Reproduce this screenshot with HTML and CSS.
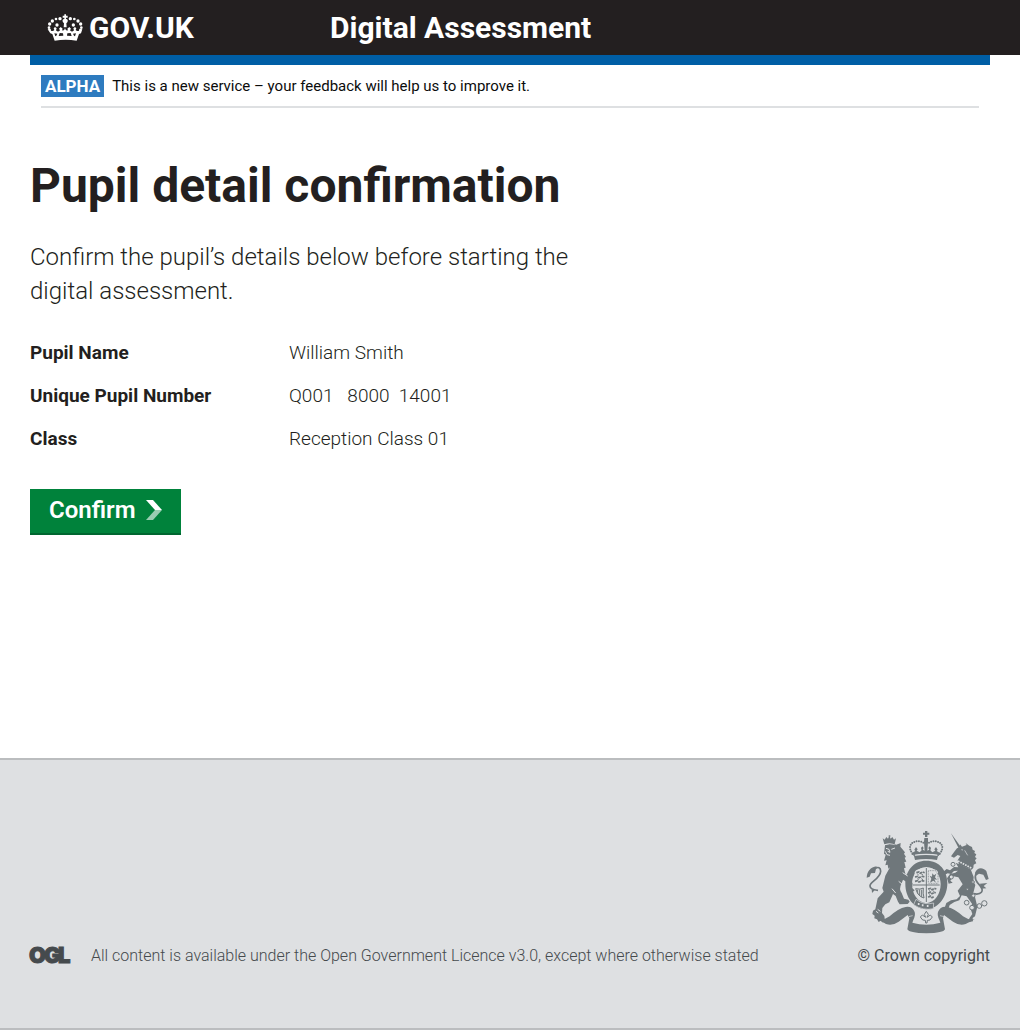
FILE: index.html
```html
<!DOCTYPE html>
<html lang="en">
<head>
<meta charset="utf-8">
<meta name="viewport" content="width=device-width, initial-scale=1">
<title>Pupil detail confirmation</title>
<link rel="stylesheet" href="styles.css">
</head>
<body>
<header class="header">
  <div class="header-inner">
    <a class="brand" href="#">
      <svg class="crown" viewBox="48 39 108 81" aria-hidden="true">
        <g fill="#fff">
          <path d="M100 40h5v4h5v6h-5v4c5 0 7 5 4 10l-3 3 1 12h-9l1-12-3-3c-3-5-1-10 4-10v-4h-5v-6h5z"/>
          <circle cx="87" cy="53" r="5"/><circle cx="75" cy="54" r="4"/><circle cx="64" cy="60" r="5"/><circle cx="56" cy="69" r="5"/><circle cx="54" cy="80" r="4"/>
          <circle cx="118" cy="53" r="5"/><circle cx="130" cy="54" r="4"/><circle cx="141" cy="60" r="5"/><circle cx="149" cy="69" r="5"/><circle cx="151" cy="80" r="4"/>
          <circle cx="78" cy="72" r="5"/><circle cx="127" cy="72" r="5"/>
          <path d="M50 85l9-2 1 6q6 3 10-2l-2-5 4-4 5 4-2 6q6 7 12 0l-3-5 5-5 6 5-2 5q9 2 9-9 0 11 9 9l-2-5 6-5 5 5-3 5q6 7 12 0l-2-6 5-4 4 4-2 5q4 5 10 2l1-6 9 2-4 12-6 2-7 20q-33-5-66 0l-7-20-6-2z"/>
        </g>
        <path d="M70 97l9 1-3 6-3 2zM86 96l10 1 1 7-14 1zM109 97l10-1 3 9-14-1zM126 98l9-1-3 9-3-2z" fill="#231f20"/>
      </svg>
      <span>GOV.UK</span>
    </a>
    <a class="service-name" href="#">Digital Assessment</a>
  </div>
</header>
<div class="wrap page">
  <div class="phase">
    <p class="phase-inner"><strong class="tag">ALPHA</strong><span>This is a new service – your feedback will help us to improve it.</span></p>
  </div>
  <main class="main">
    <h1 class="title">Pupil detail confirmation</h1>
    <p class="lead">Confirm the pupil’s details below before starting the digital assessment.</p>
    <dl class="details">
      <dt>Pupil Name</dt><dd>William Smith</dd>
      <dt>Unique Pupil Number</dt><dd>Q001&nbsp;&nbsp; 8000&nbsp; 14001</dd>
      <dt>Class</dt><dd>Reception Class 01</dd>
    </dl>
    <button class="confirm" type="button">Confirm
      <svg class="chevron" viewBox="0 0 16 20" aria-hidden="true">
        <path d="M0 0h7l9 10H9z" fill="#fff"/><path d="M9 10h7l-9 10H0z" fill="#99cdb1"/>
      </svg>
    </button>
  </main>
</div>
<footer class="footer">
  <div class="wrap footer-inner">
    <div class="licence">
      <svg class="ogl" viewBox="0 0 42 28" role="img" aria-label="Open Government Licence"><text x="-1 14 28" y="21">OGL</text></svg>
      <p>All content is available under the <a href="#">Open Government Licence v3.0</a>, except where otherwise stated</p>
    </div>
    <a class="copyright" href="#">
      <svg class="crest" viewBox="48 30 372 312" aria-hidden="true">
        <g fill="#6f777b">
          <!-- central crown -->
          <path d="M225 33h7v5h6v6h-6v7h-7v-7h-6v-6h6z"/>
          <path d="M223 54h11v12l-2 26 6-3-3-5 4-5 4 5-2 7 6 6 9-5-3-4 5-7 5 8-3 4 10 6 1 6q-42-7-86 0l1-6 10-6-3-4 5-8 5 7-3 4 9 5 6-6-2-7 4-5 4 5-3 5 6 3-2-26z"/>
          <path d="M192 108q36-6 72 0l-3 12q-33-6-66 0z"/>
        </g>
        <g fill="none" stroke="#6f777b" stroke-width="6" stroke-linecap="round" stroke-dasharray="0 7">
          <path d="M220 68c-14-10-41-3-40 16 1 9 6 16 14 22"/><path d="M237 68c14-10 41-3 40 16-1 9-6 16-14 22"/>
        </g>
        <!-- garter and shield -->
        <path fill="#6f777b" fill-rule="evenodd" d="M229 122c40 0 63 30 63 68s-24 76-63 78c-40-2-63-38-63-76s23-70 63-70zm0 19c-28 0-43 26-43 51 0 30 17 55 43 58 26-3 43-28 43-58 0-25-15-51-43-51z"/>
        <path d="M194 156q5-11 35-12 30 1 35 12v47q-4 34-35 43-31-9-35-43z" fill="#dee0e2"/>
        <path d="M229 144v102M189 195h80" stroke="#6f777b" stroke-width="3"/>
        <g fill="none" stroke="#6f777b" stroke-width="5">
          <path d="M199 158l8-2 4 4 7-4 6 2M195 171l8-2 4 4 11-4 6 2M195 184l8-2 4 4 11-4 6 2M234 207l8-2 4 4 7-4 6 2M234 219l8-2 4 4 7-4 4 2M234 231l8-2 4 4 5-3" stroke-dasharray="9 2"/>
          <path d="M202 162l4 3M214 162l5 3M202 176l4 3M214 176l5 3M237 212l5 3M248 212l5 3M237 224l5 3" stroke-width="3"/>
        </g>
        <path d="M235 152h22l7 12v26h-29z" fill="none" stroke="#6f777b" stroke-width="2" stroke-dasharray="3 2"/>
        <path d="M240 188l4-12-5-9 7 3 1-10 5 6 7-5-4 11 6 7-8-1 5 10-8-6z" fill="#6f777b"/>
        <path d="M197 206q14 4 23-2-2 16 2 30-18-4-25-28zM203 209v12M209 209v19M215 209v22" fill="none" stroke="#6f777b" stroke-width="3"/>
        <!-- lion -->
        <g fill="#6f777b">
          <path d="M103 73l-5-18 6 4 5-8 5 5 4-9 4 9 5-5 5 8 6-4-4 18q-16-5-31 0z"/><path d="M116 46h5v4h-5z"/>
          <path d="M105 76q17-8 34-2l13-5-1 11 14 17-3 4 6 10-4 2 5 12-6 1 4 17-5 2 4 16 13 10 9 20-2 13 8 7-9 7-8-5-5-10-2-17-11-7-5 13q-8 15 1 27l7 17 13 3 4 6-6 7-24 1-5-8-7-17-8-6-11 25-12 6-9 11-1 15 7 9 2 14-6 6-7-6-6 4-5-8-8-3 1-8-7-5 2-10 7-4 7-33 18-20-4-11 9-37 14-25-5 4-2-12-7 2 4-15-8 1 5-18-5-3z"/>
        </g>
        <path d="M103 74q16-5 31 0" fill="none" stroke="#dee0e2" stroke-width="2"/>
        <path d="M108 85l9 3 3 9-7-3M124 88l11-4M106 94l5 10 9 2" fill="none" stroke="#dee0e2" stroke-width="3"/>
        <path d="M146 184l11 9 2 16M126 206l11 13M78 274l7 5M83 268l8 6M158 158l15 10" fill="none" stroke="#dee0e2" stroke-width="3"/>
        <path d="M84 211c-7-1-23-1-24-13-1-13 31-21 32-44 0-11-8-14-15-9" fill="none" stroke="#6f777b" stroke-width="5"/>
        <path d="M50 173c1-18 11-32 30-34l-5 20-12 1-4 10z" fill="#6f777b"/><path d="M65 207l1 12 8-8z" fill="#6f777b"/>
        <!-- unicorn -->
        <g fill="#6f777b">
          <path d="M303 40l29 40-6 5z"/>
          <path d="M321 85l7-3 2-9 6 7 14-5-3-6 11 8 8 4 2 8 7 4-2 6 6 4-4 8 5 4-5 6 4 9-8 4-1 9-5 6-38-15-4-13 8-13-8-3-11 8-9-4 12-17z"/>
          <path d="M317 128l45 20 9 23-1 13 6 11-7 28 6 8 7 29-7 29-7 5 1 10-13 3 2-12 9-13-5-15 4-16-16-22-15-3-7 15-15 5-14 9-3 9-12-1 5-14 14-8 17-3 10-10-7-16 15-19-13-21-15-3-9 13 7 6-12 3-5-16 9-13 16-4 8-6-12 1-9 9-10-2-8 4-7-7 12-10 10 4 12-10 13 1z"/>
        </g>
        <path d="M324 123l40 21" fill="none" stroke="#dee0e2" stroke-width="5" stroke-dasharray="5 3"/>
        <path d="M334 89l5 1M344 91l9 15" fill="none" stroke="#dee0e2" stroke-width="2"/>
        <path d="M370 221c24 5 34-8 20-24-11-12-20-23-10-40" fill="none" stroke="#6f777b" stroke-width="5"/>
        <path d="M375 159c5-15 21-20 34-6l7 24-8 3-8-16-13-3-9 6zM390 191l22-2-11 9 8 7-16 1z" fill="#6f777b"/>
        <g fill="#dee0e2" stroke="#6f777b" stroke-width="3">
          <circle cx="309" cy="133" r="6"/><circle cx="304" cy="171" r="6"/><circle cx="350" cy="248" r="7"/><circle cx="366" cy="263" r="7"/><circle cx="388" cy="258" r="7"/><circle cx="403" cy="250" r="8"/><circle cx="369" cy="186" r="4"/><circle cx="370" cy="227" r="5"/><circle cx="352" cy="208" r="3"/>
        </g>
        <!-- buckle -->
        <path d="M198 238q25 19 53 11l-1 17q-31 7-59-12z" fill="#6f777b" stroke="#dee0e2" stroke-width="2"/>
        <path d="M206 249v6M218 253v6M233 255v6" stroke="#dee0e2" stroke-width="5"/>
        <!-- ribbon -->
        <path d="M85 298q18 3 34-9 26-24 48-28 20-3 27 15 3 9-4 24l-3 8q42 12 84 0l-3-8q-7-15-4-24 7-18 27-15 22 4 48 28 16 12 35 9l-27 14q-19 6-38-7l-27-20-3 10 6 33q-4 11-56 12-52-1-57-12l6-33-5-10-27 20q-18 13-38 7z" fill="#6f777b"/>
        <path d="M172 297q2-10 16-10M286 297q-2-10-16-10" fill="none" stroke="#dee0e2" stroke-width="2"/>
        <!-- plant badge -->
        <path d="M229 274l6 9-4 9 10-7 6 6-7 9-8 1-1 8h-4l-1-8-8-1-7-9 6-6 10 7-4-9z" fill="none" stroke="#6f777b" stroke-width="3"/>
      </svg>
      <span>© Crown copyright</span>
    </a>
  </div>
</footer>
</body>
</html>
```
FILE: styles.css
```css
*, *::before, *::after { box-sizing: border-box; }
body {
  margin: 0;
  min-height: 100vh;
  display: flex;
  flex-direction: column;
  font-family: Roboto, "Noto Sans", sans-serif;
  color: #231f20;
  background: #fff;
}
h1, p, dl, dd { margin: 0; }
a { color: inherit; text-decoration: none; }

.header { background: #231f20; color: #fff; }
.header-inner {
  max-width: 1020px;
  height: 55px;
  margin: 0 auto;
  padding: 0 47px;
  display: flex;
  align-items: center;
  font-size: 30px;
  font-weight: 700;
}
.brand { display: flex; align-items: center; gap: 6px; width: 283px; }
.crown { width: 36px; height: 27px; }

.wrap { width: calc(100% - 60px); max-width: 960px; margin: 0 auto; }
.page { flex: 1; }
.phase { border-top: 10px solid #005ea5; padding: 0 11px; }
.phase-inner {
  display: flex;
  align-items: center;
  gap: 8px;
  padding: 10px 0 9px;
  border-bottom: 2px solid #dee0e2;
  font-size: 15px;
  line-height: 22px;
  color: #0b0c0c;
}
.tag { padding: 0 4px; background: #2e7bbf; color: #fff; font-size: 17px; }

.main { padding: 50px 0; }
.title { font-size: 48px; line-height: 56px; font-weight: 700; }
.lead { max-width: 580px; margin: 26px 0 33px; font-size: 24px; line-height: 34px; font-weight: 300; }
.details {
  display: grid;
  grid-template-columns: 259px 1fr;
  row-gap: 19px;
  font-size: 19px;
  line-height: 24px;
}
.details dt { font-weight: 700; }
.details dd { font-weight: 300; }
.confirm {
  display: flex;
  align-items: center;
  gap: 10px;
  height: 46px;
  margin-top: 38px;
  padding: 0 19px 3px;
  border: 0;
  border-bottom: 2px solid #006630;
  background: #00823b;
  color: #fff;
  font: inherit;
  font-size: 24px;
  font-weight: 600;
}
.chevron { width: 16px; height: 20px; }

.footer {
  padding: 70px 0 60px;
  border-top: 2px solid #bbbdbf;
  border-bottom: 2px solid #bbbdbf;
  background: #dee0e2;
  color: #454a4d;
  font-size: 16px;
  line-height: 24px;
}
.footer-inner { display: flex; justify-content: space-between; align-items: flex-end; }
.licence { display: flex; align-items: center; gap: 19px; height: 24px; font-weight: 300; }
.ogl { width: 42px; height: 28px; overflow: visible; }
.ogl text { font: 900 22px Inter, sans-serif; fill: #454a4d; stroke: #454a4d; stroke-width: 1px; }
.copyright { display: flex; flex-direction: column; align-items: flex-end; gap: 10px; }
.crest { width: 124px; height: 104px; }
```
